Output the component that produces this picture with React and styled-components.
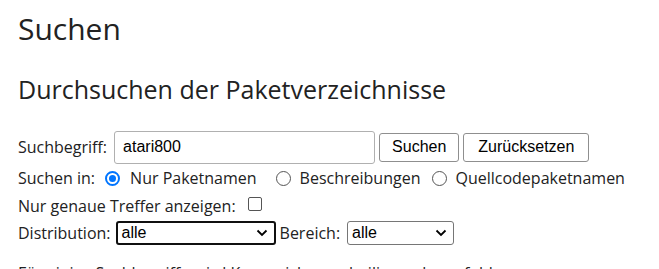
import React from "react";
import styled, { createGlobalStyle } from "styled-components";

const GlobalStyle = createGlobalStyle`
  html, body {
    margin: 0;
    padding: 0;
    background: #fff;
  }
  body {
    font-family: "Open Sans", "DejaVu Sans", sans-serif;
    color: #222;
  }
`;

const Page = styled.div`
  padding: 0 18px;
  overflow: hidden;
  height: 269px;
`;

const Title = styled.h1`
  margin: 10px 0 0;
  font-size: 30px;
  font-weight: 400;
  line-height: 38px;
  color: #222;
`;

const SubTitle = styled.h2`
  margin: 26px 0 0;
  font-size: 25px;
  font-weight: 400;
  line-height: 30px;
  color: #222;
`;

const Form = styled.form`
  margin-top: 26px;
  display: flex;
  flex-direction: column;
  font-size: 16px;
`;

const Row = styled.div`
  display: flex;
  align-items: center;
  height: ${(p) => p.h || 26}px;
  white-space: nowrap;
`;

const Label = styled.label`
  margin-right: ${(p) => p.gap || 4}px;
`;

const TextInput = styled.input`
  box-sizing: border-box;
  width: 261px;
  height: 33px;
  padding: 0 8px;
  margin-left: 3px;
  border: 1px solid #b0b0b0;
  border-radius: 3px;
  font-family: "Liberation Sans", Arial, sans-serif;
  font-size: 16px;
  color: #000;
  outline: none;
`;

const Button = styled.button`
  box-sizing: border-box;
  height: 29px;
  margin-left: 4px;
  padding: 0 ${(p) => p.px || 12}px;
  background: #fff;
  border: 1px solid #8f8f8f;
  border-radius: 3px;
  font-family: "Liberation Sans", Arial, sans-serif;
  font-size: 16px;
  color: #000;
`;

const Radio = styled.span`
  box-sizing: border-box;
  display: inline-block;
  flex: none;
  width: 15px;
  height: 15px;
  border-radius: 50%;
  margin: 0 ${(p) => p.mr || 9}px 0 ${(p) => p.ml || 6}px;
  border: ${(p) => (p.checked ? "2px solid #0075ff" : "1px solid #555")};
  background: #fff;
  position: relative;
  &::after {
    content: "";
    display: ${(p) => (p.checked ? "block" : "none")};
    position: absolute;
    left: 2px;
    top: 2px;
    width: 7px;
    height: 7px;
    border-radius: 50%;
    background: #0075ff;
  }
`;

const Checkbox = styled.span`
  box-sizing: border-box;
  display: inline-block;
  width: 14px;
  height: 14px;
  border: 1px solid #555;
  border-radius: 2px;
  margin: 0 0 4px 8px;
  background: #fff;
`;

const Select = styled.div`
  box-sizing: border-box;
  display: flex;
  align-items: center;
  justify-content: space-between;
  width: ${(p) => p.w}px;
  height: 24px;
  margin: 0 4px 0 ${(p) => p.ml || 0}px;
  padding: 0 6px 0 4px;
  border: ${(p) => (p.focused ? "2px solid #101010" : "1px solid #767676")};
  border-radius: 3px;
  font-family: "Liberation Sans", Arial, sans-serif;
  font-size: 16px;
  color: #000;
`;

const Chevron = () => (
  <svg width="12" height="8" viewBox="0 0 12 8">
    <path d="M1.5 1.5 L6 6 L10.5 1.5" fill="none" stroke="#000" strokeWidth="1.8" />
  </svg>
);

const Note = styled.p`
  margin: 16px 0 0;
  font-size: 16px;
  line-height: 22px;
`;

export default function App() {
  return (
    <React.Fragment>
      <GlobalStyle />
      <Page>
        <Title>Suchen</Title>
        <SubTitle>Durchsuchen der Paketverzeichnisse</SubTitle>
        <Form onSubmit={(e) => e.preventDefault()}>
          <Row h={34}>
            <Label>Suchbegriff:</Label>
            <TextInput defaultValue="atari800" />
            <Button type="button">Suchen</Button>
            <Button type="button" px={14}>Zurücksetzen</Button>
          </Row>
          <Row h={28}>
            <Label>Suchen in:</Label>
            <Radio checked ml={6} mr={10} />
            <span>Nur Paketnamen</span>
            <Radio ml={19} mr={9} />
            <span>Beschreibungen</span>
            <Radio ml={12} mr={8} />
            <span>Quellcodepaketnamen</span>
          </Row>
          <Row h={28}>
            <Label>Nur genaue Treffer anzeigen:</Label>
            <Checkbox />
          </Row>
          <Row h={26}>
            <Label>Distribution:</Label>
            <Select w={160} ml={1} focused>
              <span>alle</span>
              <Chevron />
            </Select>
            <Label>Bereich:</Label>
            <Select w={107} ml={3}>
              <span>alle</span>
              <Chevron />
            </Select>
          </Row>
        </Form>
        <Note>Für einige Suchbegriffe wird Kennzeichnung beiliegend empfohlen</Note>
      </Page>
    </React.Fragment>
  );
}
